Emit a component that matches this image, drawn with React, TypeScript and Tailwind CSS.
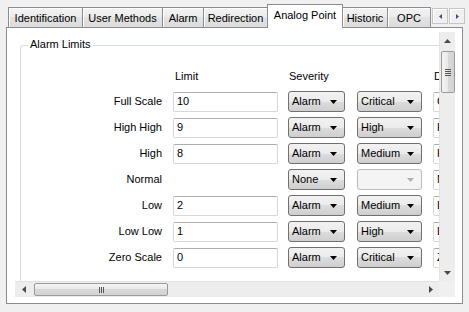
import React from "react";

type Row = { label: string; limit: string | null; sev: string; lvl: string; d: string };

const rows: Row[] = [
  { label: "Full Scale", limit: "10", sev: "Alarm", lvl: "Critical", d: "Critical" },
  { label: "High High", limit: "9", sev: "Alarm", lvl: "High", d: "High" },
  { label: "High", limit: "8", sev: "Alarm", lvl: "Medium", d: "High" },
  { label: "Normal", limit: null, sev: "None", lvl: "", d: "Normal" },
  { label: "Low", limit: "2", sev: "Alarm", lvl: "Medium", d: "Low" },
  { label: "Low Low", limit: "1", sev: "Alarm", lvl: "High", d: "Low Low" },
  { label: "Zero Scale", limit: "0", sev: "Alarm", lvl: "Critical", d: "Zero" },
];

function DownArrow({ disabled }: { disabled?: boolean }) {
  return (
    <svg width="7" height="4" viewBox="0 0 7 4" className="shrink-0">
      <path d="M0 0H7L3.5 4Z" fill={disabled ? "#b0b0b0" : "#000"} />
    </svg>
  );
}

function Combo({ w, text, disabled }: { w: string; text: string; disabled?: boolean }) {
  return (
    <div
      className={`${w} h-[21px] shrink-0 flex items-center justify-between pl-[3px] pr-[7px] rounded-[3px] border ${
        disabled
          ? "border-[#b7bbbf] bg-[#f4f4f4]"
          : "border-[#707070] bg-[linear-gradient(#f2f2f2,#ebebeb_50%,#dddddd_50%,#cfcfcf)]"
      }`}
    >
      <span>{text}</span>
      <DownArrow disabled={disabled} />
    </div>
  );
}

function TextBox({ w, value }: { w: string; value: string }) {
  return (
    <div
      className={`${w} h-[20px] shrink-0 flex items-center pl-[3px] rounded-[2px] border border-[#d5d8de] border-t-[#abadb3] bg-white overflow-hidden whitespace-nowrap`}
    >
      {value}
    </div>
  );
}

const tabs = [
  { t: "Identification", w: "w-[75px]" },
  { t: "User Methods", w: "w-[81px]" },
  { t: "Alarm", w: "w-[42px]" },
  { t: "Redirection", w: "w-[65px]" },
  { t: "Analog Point", w: "w-[76px]", sel: true },
  { t: "Historic", w: "w-[46px]" },
  { t: "OPC", w: "w-[44px]" },
];

function SmallTri({ dir }: { dir: "up" | "down" | "left" | "right" }) {
  if (dir === "up")
    return (
      <svg width="7" height="4" viewBox="0 0 7 4">
        <path d="M0 4H7L3.5 0Z" fill="#4a4a4a" />
      </svg>
    );
  if (dir === "down")
    return (
      <svg width="7" height="4" viewBox="0 0 7 4">
        <path d="M0 0H7L3.5 4Z" fill="#4a4a4a" />
      </svg>
    );
  if (dir === "left")
    return (
      <svg width="4" height="7" viewBox="0 0 4 7">
        <path d="M4 0V7L0 3.5Z" fill="#4a4a4a" />
      </svg>
    );
  return (
    <svg width="4" height="7" viewBox="0 0 4 7">
      <path d="M0 0V7L4 3.5Z" fill="#4a4a4a" />
    </svg>
  );
}

export default function App() {
  return (
    <div className="w-[469px] h-[312px] bg-[#f0f0f0] overflow-hidden text-[11px] leading-none text-black font-['Liberation_Sans',Arial,sans-serif]">
      {/* Tab strip */}
      <div className="flex h-[27px] items-end pl-[8px]">
        {tabs.map((tb, i) =>
          tb.sel ? (
            <div
              key={tb.t}
              className={`${tb.w} ${i > 0 ? "-ml-px" : ""} relative z-10 -mb-px h-[24px] shrink-0 flex items-center justify-center pb-[3px] bg-white border border-b-0 border-[#898c95]`}
            >
              {tb.t}
            </div>
          ) : (
            <div
              key={tb.t}
              className={`${tb.w} ${i > 0 ? "-ml-px" : ""} h-[20px] shrink-0 flex items-center justify-center pt-px border border-b-0 border-[#898c95] bg-[linear-gradient(#f3f3f3,#ebebeb_50%,#e2e2e2_50%,#dcdcdc)] shadow-[inset_1px_1px_0_#fff]`}
            >
              {tb.t}
            </div>
          )
        )}
        <div className="self-start mt-[8px] ml-px flex gap-px">
          <div className="w-[16px] h-[16px] flex items-center justify-center border border-[#c6c6c6] bg-[#f0f0f0] shadow-[inset_1px_1px_0_#fff]">
            <svg width="3" height="5" viewBox="0 0 3 5">
              <path d="M3 0V5L0 2.5Z" fill="#3c4f70" />
            </svg>
          </div>
          <div className="w-[16px] h-[16px] flex items-center justify-center border border-[#c6c6c6] bg-[#f0f0f0] shadow-[inset_1px_1px_0_#fff]">
            <svg width="3" height="5" viewBox="0 0 3 5">
              <path d="M0 0V5L3 2.5Z" fill="#3c4f70" />
            </svg>
          </div>
        </div>
      </div>

      {/* Tab page */}
      <div className="ml-[6px] w-[457px] h-[277px] border border-[#898c95] bg-white pt-[4px] pl-[8px]">
        <div className="w-[440px] h-[265px] flex flex-col">
          <div className="flex h-[249px]">
            {/* viewport */}
            <div className="w-[424px] h-[249px] overflow-hidden bg-white">
              <div className="ml-[5px] mt-[13px] w-[600px] h-[400px] border-l border-t border-[#d5dfe5] rounded-tl-[3px] relative">
                <span className="absolute left-[7px] top-[-7px] bg-white px-[2px]">Alarm Limits</span>
                <div className="pt-[23px] flex flex-col">
                  {/* header */}
                  <div className="flex h-[14px] items-center">
                    <div className="w-[154px] shrink-0" />
                    <div className="w-[114px] shrink-0">Limit</div>
                    <div className="w-[145px] shrink-0">Severity</div>
                    <div className="shrink-0">Description</div>
                  </div>
                  <div className="mt-[8px] flex flex-col gap-[5px]">
                    {rows.map((r) => (
                      <div key={r.label} className="flex items-center h-[21px]">
                        <div className="w-[141px] shrink-0 text-right">{r.label}</div>
                        <div className="ml-[11px] w-[105px] shrink-0">
                          {r.limit !== null && <TextBox w="w-[105px]" value={r.limit} />}
                        </div>
                        <div className="ml-[10px]">
                          <Combo w="w-[57px]" text={r.sev} />
                        </div>
                        <div className="ml-[12px]">
                          <Combo w="w-[65px]" text={r.lvl} disabled={r.lvl === ""} />
                        </div>
                        <div className="ml-[11px]">
                          <TextBox w="w-[80px]" value={r.d} />
                        </div>
                      </div>
                    ))}
                  </div>
                </div>
              </div>
            </div>
            {/* vertical scrollbar */}
            <div className="w-[16px] h-[249px] flex flex-col justify-between bg-[#ededed] border-l border-[#e3e3e3]">
              <div className="flex flex-col items-center">
                <div className="h-[17px] w-full flex items-center justify-center">
                  <SmallTri dir="up" />
                </div>
                <div className="mt-[2px] w-[14px] h-[42px] rounded-[2px] border border-[#9b9b9b] bg-[linear-gradient(to_right,#f4f4f4,#e8e8e8_50%,#d9d9d9_50%,#d2d2d2)] flex flex-col items-center justify-center gap-[1px]">
                  <div className="w-[6px] h-px bg-[#555]" />
                  <div className="w-[6px] h-px bg-[#555]" />
                  <div className="w-[6px] h-px bg-[#555]" />
                  <div className="w-[6px] h-px bg-[#555]" />
                </div>
              </div>
              <div className="h-[17px] w-full flex items-center justify-center">
                <SmallTri dir="down" />
              </div>
            </div>
          </div>
          <div className="flex h-[16px]">
            {/* horizontal scrollbar */}
            <div className="w-[424px] h-[16px] flex items-center justify-between bg-[#ededed] border-t border-[#e3e3e3]">
              <div className="flex items-center">
                <div className="w-[17px] h-[15px] flex items-center justify-center">
                  <SmallTri dir="left" />
                </div>
                <div className="ml-[2px] w-[134px] h-[13px] rounded-[2px] border border-[#9b9b9b] bg-[linear-gradient(#f4f4f4,#e8e8e8_50%,#d9d9d9_50%,#d2d2d2)] flex items-center justify-center gap-[1px]">
                  <div className="w-px h-[6px] bg-[#555]" />
                  <div className="w-px h-[6px] bg-[#555]" />
                  <div className="w-px h-[6px] bg-[#555]" />
                </div>
              </div>
              <div className="w-[17px] h-[15px] flex items-center justify-center">
                <SmallTri dir="right" />
              </div>
            </div>
            <div className="w-[16px] h-[16px] bg-[#f0f0f0]" />
          </div>
        </div>
      </div>
    </div>
  );
}
